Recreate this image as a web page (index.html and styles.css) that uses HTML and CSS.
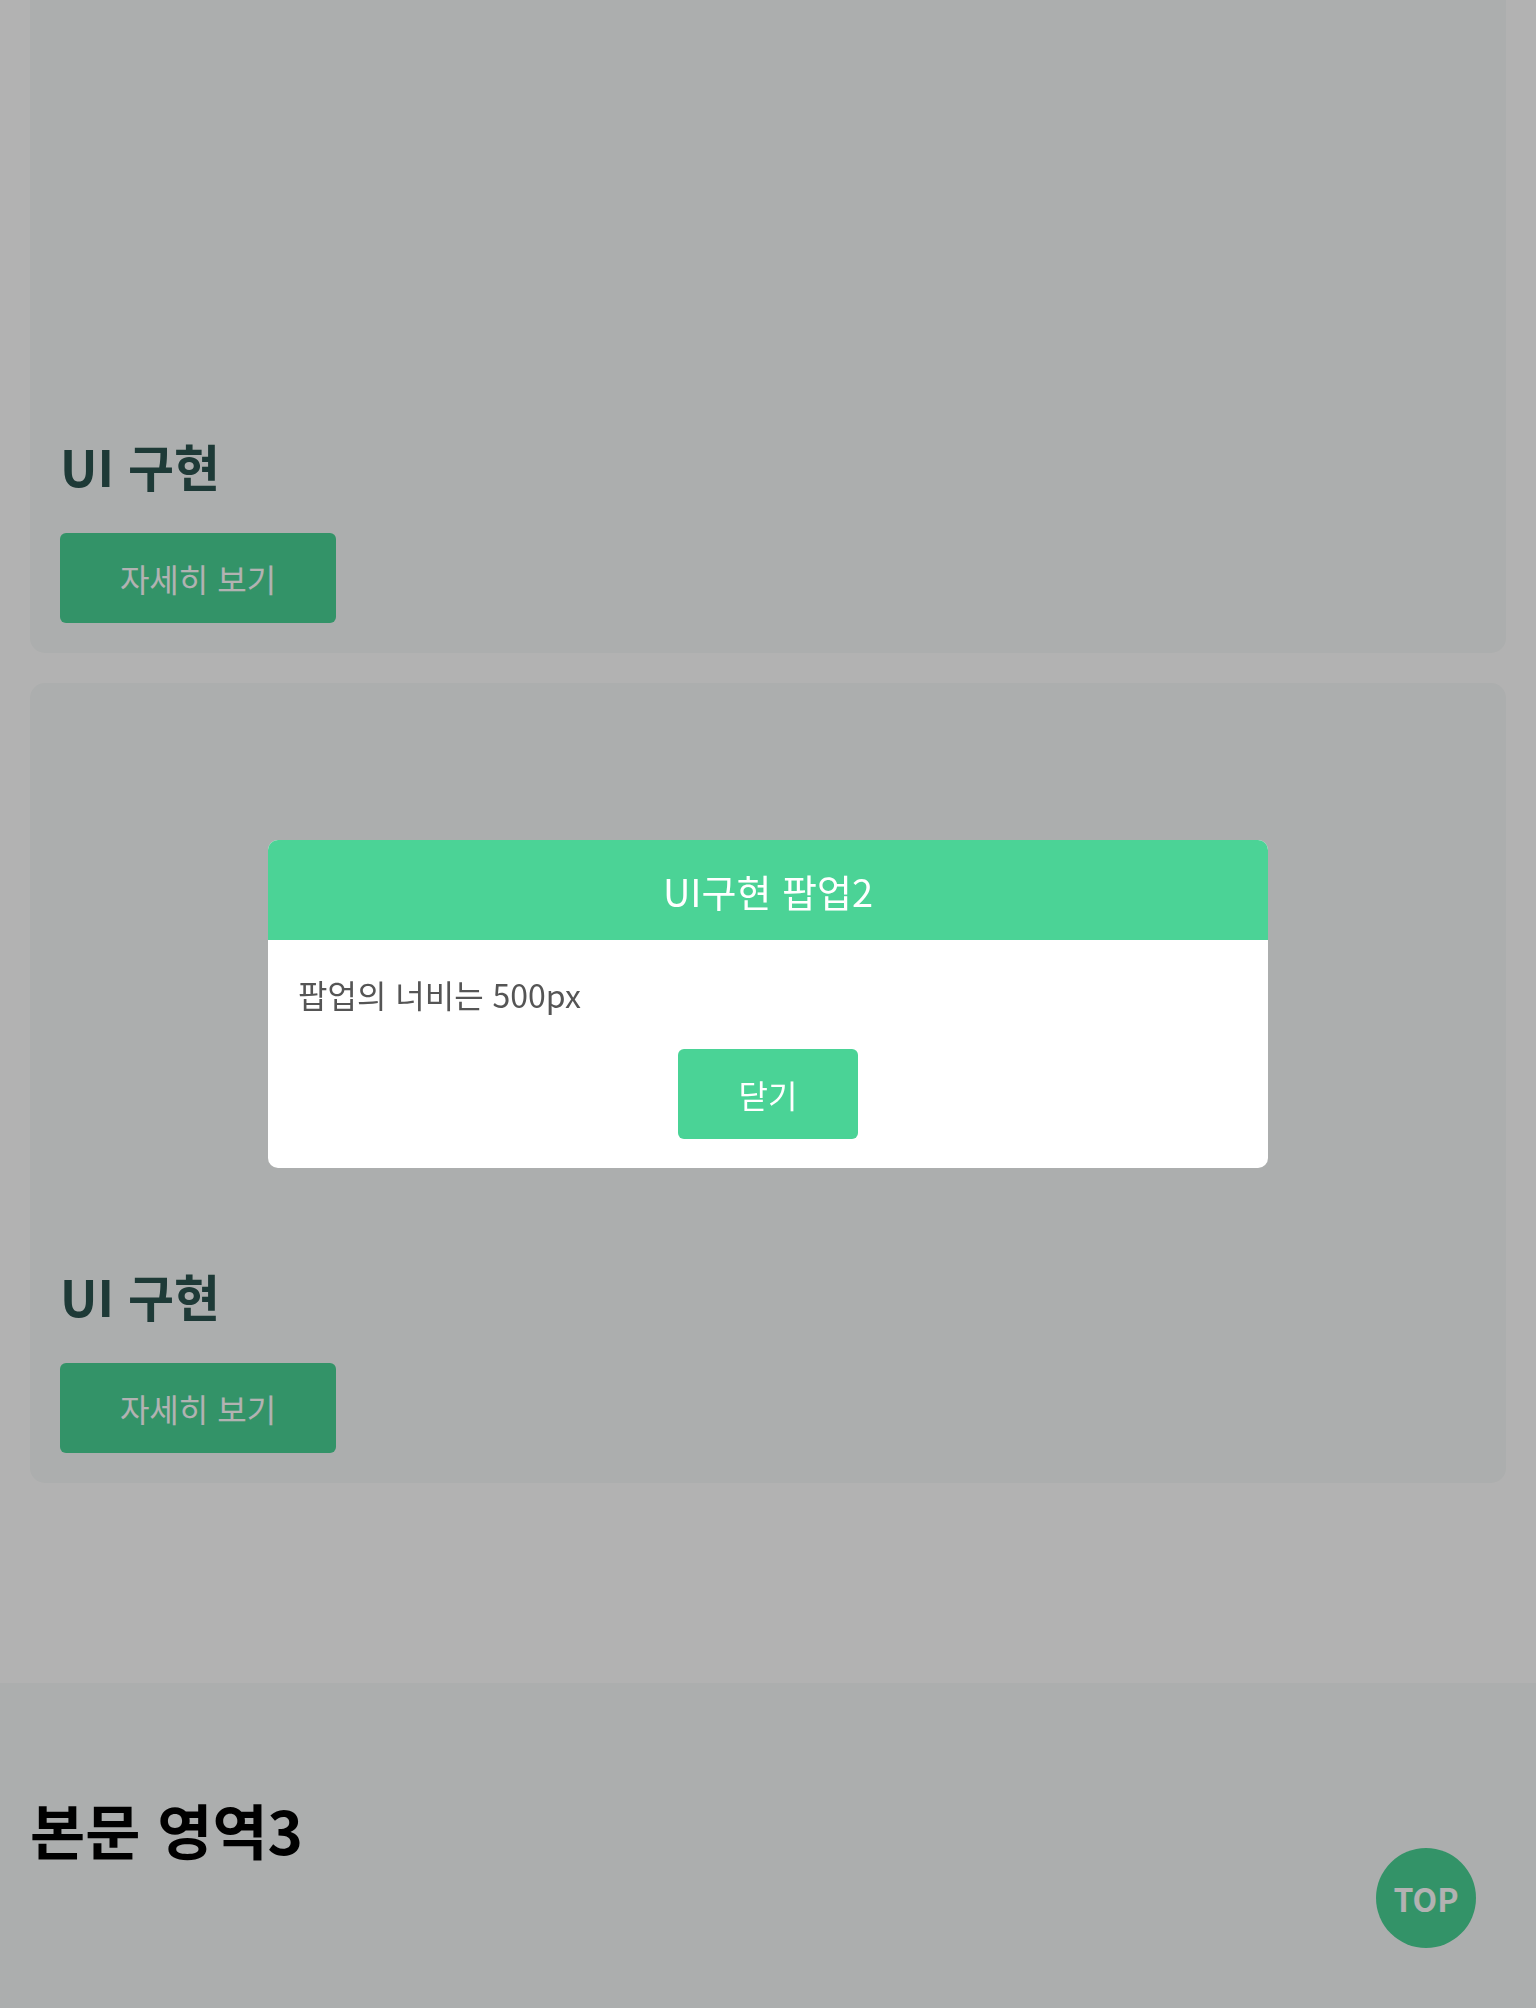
FILE: index.html
```html
<!DOCTYPE html>
<html lang="ko">
<head>
<meta charset="utf-8">
<title>UI 구현</title>
<link rel="stylesheet" href="styles.css">
</head>
<body>
<main class="page">
  <section class="cards">
    <article class="card">
      <h3 class="card-title">UI 구현</h3>
      <a class="card-btn" href="#">자세히 보기</a>
    </article>
    <article class="card">
      <h3 class="card-title">UI 구현</h3>
      <a class="card-btn" href="#">자세히 보기</a>
    </article>
  </section>
  <section class="area">
    <h2 class="area-title">본문 영역3</h2>
  </section>
</main>

<a class="top-btn" href="#">TOP</a>

<div class="overlay">
  <div class="popup">
    <div class="popup-head">UI구현 팝업2</div>
    <div class="popup-body">
      <p class="popup-text">팝업의 너비는 500px</p>
      <button class="popup-close" type="button">닫기</button>
    </div>
  </div>
</div>
</body>
</html>
```

FILE: styles.css
```css
* { box-sizing: border-box; }

html, body {
  margin: 0;
  padding: 0;
}

body {
  background: #ffffff;
  font-family: "Noto Sans CJK KR", "Noto Sans", sans-serif;
  color: #000;
  overflow: hidden;
  height: 2008px;
}

.page {
  display: flex;
  flex-direction: column;
}

.cards {
  display: flex;
  flex-direction: column;
  gap: 30px;
  padding: 0 30px 200px;
  margin-top: -147px;
}

.card {
  height: 800px;
  background: #f7faf9;
  border-radius: 15px;
  padding: 30px;
  display: flex;
  flex-direction: column;
  justify-content: flex-end;
  align-items: flex-start;
}

.card-title {
  margin: 0 0 38px;
  font-size: 50px;
  line-height: 1.2;
  font-weight: 700;
  color: #2c534f;
}

.card-btn {
  display: flex;
  align-items: center;
  justify-content: center;
  width: 276px;
  height: 90px;
  background: #4ad396;
  color: #ffffff;
  border-radius: 6px;
  font-size: 32px;
  font-weight: 400;
  text-decoration: none;
}

.area {
  background: #f7faf9;
  padding: 110px 30px 0;
  min-height: 400px;
}

.area-title {
  margin: 0;
  font-size: 60px;
  line-height: 1.2;
  font-weight: 700;
  color: #000;
}

.top-btn {
  position: fixed;
  right: 60px;
  bottom: 60px;
  width: 100px;
  height: 100px;
  border-radius: 50%;
  background: #4ad396;
  color: #ffffff;
  display: flex;
  align-items: center;
  justify-content: center;
  font-size: 32px;
  font-weight: 700;
  text-decoration: none;
}

.overlay {
  position: fixed;
  inset: 0;
  background: rgba(0, 0, 0, 0.3);
  display: flex;
  align-items: center;
  justify-content: center;
  z-index: 10;
}

.popup {
  width: 1000px;
  background: #ffffff;
  border-radius: 10px;
  overflow: hidden;
}

.popup-head {
  height: 100px;
  display: flex;
  align-items: center;
  justify-content: center;
  background: #4bd396;
  color: #ffffff;
  font-size: 38px;
  font-weight: 400;
}

.popup-body {
  padding: 30px 30px 29px;
  display: flex;
  flex-direction: column;
}

.popup-text {
  margin: 0 0 31px;
  font-size: 32px;
  line-height: 48px;
  font-weight: 400;
  color: #555555;
}

.popup-close {
  align-self: center;
  width: 180px;
  height: 90px;
  border: 0;
  border-radius: 6px;
  background: #4ad396;
  color: #ffffff;
  font-family: inherit;
  font-size: 32px;
  font-weight: 400;
}
```
